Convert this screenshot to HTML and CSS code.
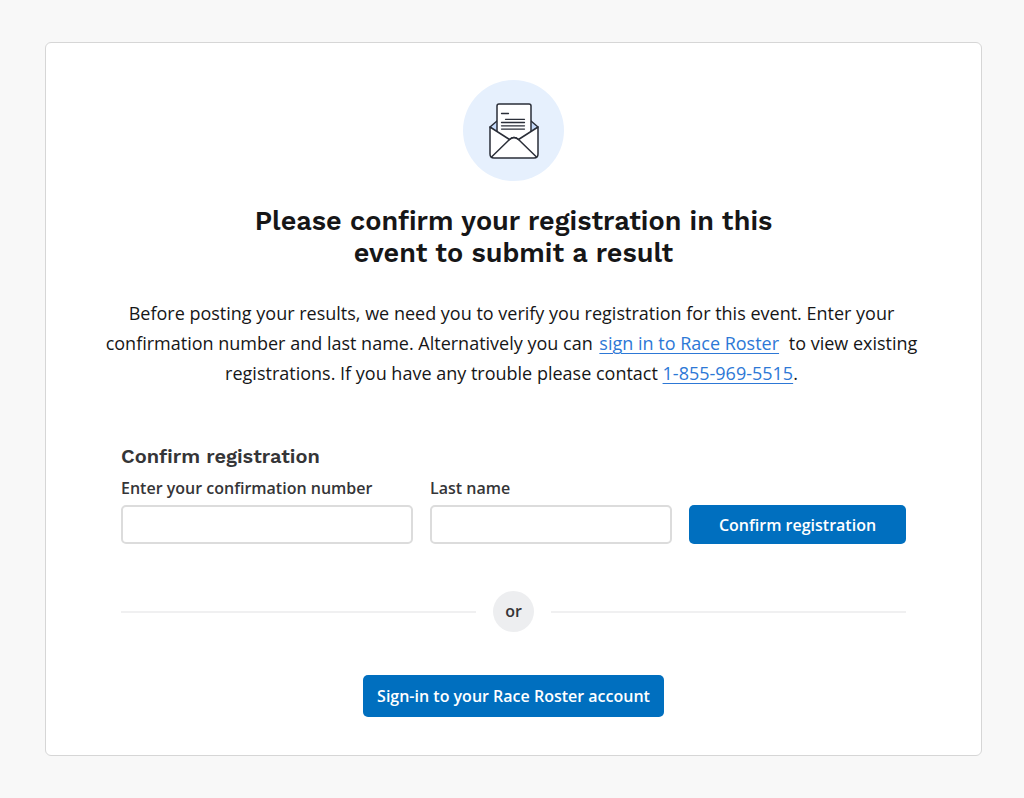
FILE: index.html
```html
<!DOCTYPE html>
<html lang="en">
<head>
<meta charset="utf-8">
<meta name="viewport" content="width=device-width, initial-scale=1">
<title>Confirm your registration</title>
<link rel="stylesheet" href="styles.css">
</head>
<body>
<main class="card">
  <div class="badge">
    <svg class="badge-icon" viewBox="0 0 52 58" fill="none" stroke="#2a2e38" stroke-width="1.5" stroke-linejoin="round" stroke-linecap="round" aria-hidden="true">
      <path d="M9 19 2 25 26 44 50 25 43 19Z" fill="#c5dafa"/>
      <path d="M9 30V4q0-2 2-2h30q2 0 2 2V30L26 42Z" fill="#fff"/>
      <path d="M13.500 11.500h7M17.500 17.300h19M13.500 20.500h23M13.500 23.800h23M13.500 27.100h23" stroke-width="1.300"/>
      <path d="M2 25 21.500 37.500Q26 33.500 30.500 37.500L50 25V52q0 4-4 4H6q-4 0-4-4Z" fill="#fff"/>
      <path d="M3.500 55 21.500 37.500q4.500-4 9 0L48.500 55"/>
    </svg>
  </div>
  <h1 class="title">Please confirm your registration in this event to submit a result</h1>
  <p class="intro">Before posting your results, we need you to verify you registration for this event. Enter your confirmation number and last name. Alternatively you can <a class="link link-signin" href="#signin">sign in to Race Roster</a> to view existing registrations. If you have any trouble please contact <a class="link" href="tel:18559695515">1-855-969-5515</a>.</p>
  <form class="form">
    <h2 class="form-title">Confirm registration</h2>
    <div class="fields">
      <div class="field field-number">
        <label class="label" for="number">Enter your confirmation number</label>
        <input class="input" id="number" type="text">
      </div>
      <div class="field field-name">
        <label class="label" for="lastname">Last name</label>
        <input class="input" id="lastname" type="text">
      </div>
      <button class="button button-confirm" type="submit">Confirm registration</button>
    </div>
  </form>
  <div class="divider"><span class="divider-badge">or</span></div>
  <button class="button button-signin" type="button">Sign-in to your Race Roster account</button>
</main>
</body>
</html>
```

FILE: styles.css
```css
* {
  box-sizing: border-box;
}

body {
  margin: 0;
  padding: 42px 42px 42px 45px;
  background: #f8f8f8;
  color: #161617;
  font-family: "Open Sans", sans-serif;
}

.card {
  display: flex;
  flex-direction: column;
  align-items: center;
  padding: 37px 58px 38px;
  background: #fff;
  border: 1px solid #d6d6d6;
  border-radius: 6px;
}

.badge {
  display: grid;
  place-items: center;
  width: 101px;
  height: 101px;
  border-radius: 50%;
  background: #e6f0fd;
}

.badge-icon {
  width: 52px;
  height: 58px;
}

.title {
  max-width: 560px;
  margin: 24px 0 0;
  font-family: "Work Sans", Inter, sans-serif;
  font-size: 27px;
  font-weight: 600;
  line-height: 32px;
  text-align: center;
}

.intro {
  max-width: 820px;
  margin: 29px 0 0;
  padding-right: 4px;
  font-size: 18px;
  line-height: 30px;
  text-align: center;
}

.link {
  color: #2d78d6;
  text-decoration: underline;
  text-decoration-thickness: 1px;
  text-underline-offset: 3px;
}

.link-signin {
  margin: 0 5px 0 2px;
}

.form {
  width: 100%;
  max-width: 785px;
  margin-top: 56px;
  color: #353537;
}

.form-title {
  margin: 0;
  font-family: "Work Sans", Inter, sans-serif;
  font-size: 20px;
  font-weight: 600;
  line-height: 24px;
}

.fields {
  display: flex;
  flex-wrap: wrap;
  align-items: flex-end;
  gap: 17px;
  margin-top: 8px;
}

.field {
  display: flex;
  flex-direction: column;
  gap: 5px;
}

.field-number {
  flex: 292 1 0;
}

.field-name {
  flex: 242 1 0;
}

.label {
  font-size: 16px;
  font-weight: 600;
  line-height: 24px;
  white-space: nowrap;
}

.input {
  width: 100%;
  height: 39px;
  padding: 0 12px;
  border: 2px solid #dcdcdc;
  border-radius: 5px;
  background: #fff;
  font: inherit;
}

.button {
  padding: 0;
  border: 0;
  border-radius: 5px;
  background: #006fbf;
  color: #fff;
  font-family: inherit;
  font-size: 16px;
  font-weight: 600;
}

.button-confirm {
  flex: 217 1 0;
  height: 39px;
  white-space: nowrap;
}

.divider {
  display: flex;
  align-items: center;
  gap: 17px;
  width: 100%;
  max-width: 785px;
  margin-top: 47px;
}

.divider::before,
.divider::after {
  content: "";
  flex: 1;
  height: 2px;
  background: #f0f0f1;
}

.divider-badge {
  width: 41px;
  height: 41px;
  border-radius: 50%;
  background: #edeef0;
  color: #353537;
  font-size: 16px;
  font-weight: 600;
  line-height: 40px;
  text-align: center;
}

.button-signin {
  height: 42px;
  margin-top: 43px;
  padding: 0 14px;
}
```
